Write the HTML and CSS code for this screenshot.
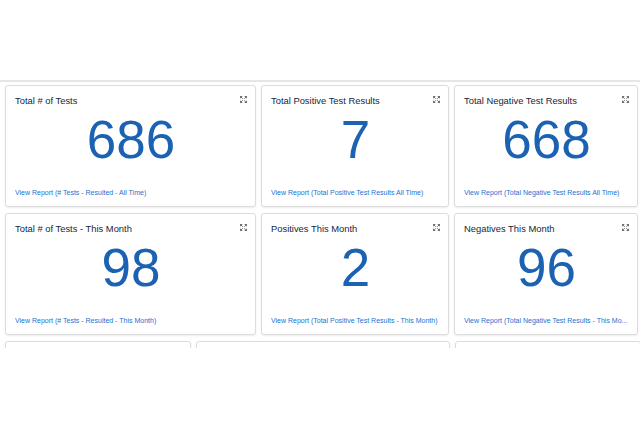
FILE: index.html
```html
<!DOCTYPE html>
<html lang="en">
<head>
    <meta charset="UTF-8">
    <meta name="viewport" content="width=device-width, initial-scale=1.0">
    <title>Test Results Dashboard</title>
    <link rel="stylesheet" href="styles.css">
</head>
<body>
    <div id="wrap">
        <div class="topbar"></div>
        <section class="board">
            <div class="row row--metric">
                <div class="card">
                    <div class="card__head">
                        <span class="card__title">Total # of Tests</span>
                        <svg class="card__icon" viewBox="0 0 10 10"><path class="tip" d="M0 0h4L0 4zM10 0v4L6 0zM0 10V6l4 4zM10 10H6l4-4z"/><path class="bar" d="M1 1l3 3M9 1L6 4M1 9l3-3M9 9L6 6"/></svg>
                    </div>
                    <div class="card__num">686</div>
                    <a class="card__link" href="#">View Report (# Tests - Resulted - All Time)</a>
                </div>
                <div class="card">
                    <div class="card__head">
                        <span class="card__title">Total Positive Test Results</span>
                        <svg class="card__icon" viewBox="0 0 10 10"><path class="tip" d="M0 0h4L0 4zM10 0v4L6 0zM0 10V6l4 4zM10 10H6l4-4z"/><path class="bar" d="M1 1l3 3M9 1L6 4M1 9l3-3M9 9L6 6"/></svg>
                    </div>
                    <div class="card__num">7</div>
                    <a class="card__link" href="#">View Report (Total Positive Test Results All Time)</a>
                </div>
                <div class="card">
                    <div class="card__head">
                        <span class="card__title">Total Negative Test Results</span>
                        <svg class="card__icon" viewBox="0 0 10 10"><path class="tip" d="M0 0h4L0 4zM10 0v4L6 0zM0 10V6l4 4zM10 10H6l4-4z"/><path class="bar" d="M1 1l3 3M9 1L6 4M1 9l3-3M9 9L6 6"/></svg>
                    </div>
                    <div class="card__num">668</div>
                    <a class="card__link" href="#">View Report (Total Negative Test Results All Time)</a>
                </div>
            </div>
            <div class="row row--metric">
                <div class="card">
                    <div class="card__head">
                        <span class="card__title">Total # of Tests - This Month</span>
                        <svg class="card__icon" viewBox="0 0 10 10"><path class="tip" d="M0 0h4L0 4zM10 0v4L6 0zM0 10V6l4 4zM10 10H6l4-4z"/><path class="bar" d="M1 1l3 3M9 1L6 4M1 9l3-3M9 9L6 6"/></svg>
                    </div>
                    <div class="card__num">98</div>
                    <a class="card__link" href="#">View Report (# Tests - Resulted - This Month)</a>
                </div>
                <div class="card">
                    <div class="card__head">
                        <span class="card__title">Positives This Month</span>
                        <svg class="card__icon" viewBox="0 0 10 10"><path class="tip" d="M0 0h4L0 4zM10 0v4L6 0zM0 10V6l4 4zM10 10H6l4-4z"/><path class="bar" d="M1 1l3 3M9 1L6 4M1 9l3-3M9 9L6 6"/></svg>
                    </div>
                    <div class="card__num">2</div>
                    <a class="card__link" href="#">View Report (Total Positive Test Results - This Month)</a>
                </div>
                <div class="card">
                    <div class="card__head">
                        <span class="card__title">Negatives This Month</span>
                        <svg class="card__icon" viewBox="0 0 10 10"><path class="tip" d="M0 0h4L0 4zM10 0v4L6 0zM0 10V6l4 4zM10 10H6l4-4z"/><path class="bar" d="M1 1l3 3M9 1L6 4M1 9l3-3M9 9L6 6"/></svg>
                    </div>
                    <div class="card__num">96</div>
                    <a class="card__link" href="#">View Report (Total Negative Test Results - This Mo...</a>
                </div>
            </div>
            <div class="row row--more">
                <div class="card"></div>
                <div class="card"></div>
                <div class="card"></div>
            </div>
        </section>
    </div>
</body>
</html>
```

FILE: styles.css
```css
* {
    margin: 0;
    padding: 0;
    box-sizing: border-box;
}
body {
    background-color: #fff;
    font-family: "Liberation Sans", Arial, sans-serif;
}
#wrap {
    width: 640px;
    height: 428px;
    overflow: hidden;
}
.topbar {
    height: 82px;
    border-bottom: 2px solid #e6e6e6;
}
.board {    /* 카드 영역, 세번째 줄은 잘려 보임 */
    height: 266px;
    padding: 3px 0 0 5px;
    overflow: hidden;
    display: flex;
    flex-direction: column;
    gap: 6px;
}
.row {
    display: flex;
    gap: 5px;
}
.row--metric .card:nth-child(1) { width: 251px; }
.row--metric .card:nth-child(2) { width: 188px; }
.row--metric .card:nth-child(3) { width: 184px; }
.row--more .card:nth-child(1) { width: 186px; }
.row--more .card:nth-child(2) { width: 254px; }
.row--more .card:nth-child(3) { width: 186px; }
.card {
    height: 122px;
    flex-shrink: 0;
    border: 1px solid #dcdcdc;
    border-radius: 3px;
    box-shadow: 0 1px 2px rgba(0, 0, 0, 0.08);
    padding: 8px 8px 8px 9px;
    display: flex;
    flex-direction: column;
}
.card__head {
    display: flex;
    justify-content: space-between;
    align-items: flex-start;
    height: 14px;
}
.card__title {
    font-size: 9.4px;
    line-height: 14px;
    color: #16263a;
}
.card__icon {
    width: 7px;
    height: 7px;
    margin-top: 2px;
}
.card__icon .tip {
    fill: #707070;
}
.card__icon .bar {
    fill: none;
    stroke: #707070;
    stroke-width: 1.3;
}
.card__num {
    margin-top: 5px;
    font-size: 53px;
    line-height: 53px;
    text-align: center;
    color: #1b63b2;
}
.card__link {
    margin-top: auto;
    font-size: 7px;
    line-height: 10px;
    color: #1a73d0;
    text-decoration: none;
    white-space: nowrap;
    overflow: hidden;
}
```
